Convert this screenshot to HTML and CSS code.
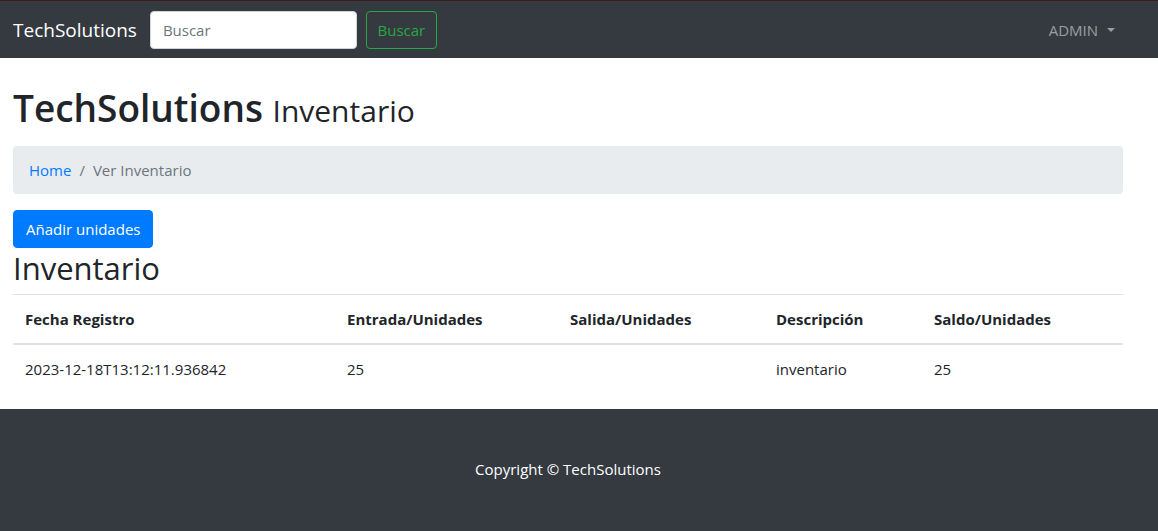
FILE: index.html
```html
<!DOCTYPE html>
<html lang="es">
<head>
<meta charset="utf-8">
<title>TechSolutions Inventario</title>
<link rel="stylesheet" href="styles.css">
</head>
<body>
<nav class="navbar">
  <a class="brand" href="#">TechSolutions</a>
  <form class="search">
    <input class="search-input" type="text" placeholder="Buscar">
    <button class="btn-outline-success" type="button">Buscar</button>
  </form>
  <div class="nav-right">
    <a class="nav-link" href="#">ADMIN<span class="caret"></span></a>
  </div>
</nav>
<main class="content">
  <h1 class="title">TechSolutions <small>Inventario</small></h1>
  <ol class="breadcrumb">
    <li><a href="#">Home</a></li>
    <li class="active">Ver Inventario</li>
  </ol>
  <button class="btn-primary" type="button">Añadir unidades</button>
  <h2 class="subtitle">Inventario</h2>
  <table class="table">
    <colgroup>
      <col class="c1"><col class="c2"><col class="c3"><col class="c4"><col class="c5">
    </colgroup>
    <thead>
      <tr>
        <th>Fecha Registro</th>
        <th>Entrada/Unidades</th>
        <th>Salida/Unidades</th>
        <th>Descripción</th>
        <th>Saldo/Unidades</th>
      </tr>
    </thead>
    <tbody>
      <tr>
        <td>2023-12-18T13:12:11.936842</td>
        <td>25</td>
        <td></td>
        <td>inventario</td>
        <td>25</td>
      </tr>
    </tbody>
  </table>
</main>
<footer class="footer">
  <div class="footer-inner">Copyright © TechSolutions</div>
</footer>
</body>
</html>
```

FILE: styles.css
```css
* { box-sizing: border-box; }
html, body { margin: 0; padding: 0; }
body {
  font-family: "Open Sans", "Noto Sans", sans-serif;
  font-size: 15px;
  line-height: 1.5;
  color: #212529;
  background: #fff;
}
a { text-decoration: none; }

.navbar {
  display: flex;
  align-items: center;
  height: 58px;
  background: #343a40;
  border-top: 1px solid #3b1c1f;
  padding: 1px 35px 0 13px;
}
.brand {
  color: #fff;
  font-size: 19px;
  line-height: 30px;
  margin-right: 13px;
}
.search { display: flex; align-items: center; }
.search-input {
  width: 207px;
  height: 38px;
  border: 1px solid #ced4da;
  border-radius: 4px;
  padding: 6px 12px;
  font: inherit;
  color: #495057;
  background: #fff;
}
.search-input::placeholder { color: #6c757d; opacity: 1; }
.btn-outline-success {
  margin-left: 9px;
  height: 38px;
  width: 71px;
  padding: 0;
  border: 1px solid #28a745;
  border-radius: 4px;
  background: transparent;
  color: #28a745;
  font: inherit;
}
.nav-right { margin-left: auto; }
.nav-link {
  color: rgba(255,255,255,.5);
  display: inline-flex;
  align-items: center;
  padding: 8px;
}
.caret {
  display: inline-block;
  margin-left: 9px;
  border-top: 4.5px solid rgba(255,255,255,.5);
  border-left: 4.5px solid transparent;
  border-right: 4.5px solid transparent;
}

.content {
  padding: 0 35px 0 13px;
}
.title {
  margin: 26px 0 11px;
  font-size: 37px;
  font-weight: 600;
  line-height: 48px;
}
.title small {
  font-size: 30px;
  font-weight: 400;
}
.breadcrumb {
  display: flex;
  list-style: none;
  margin: 0 0 16px;
  padding: 0 16px;
  height: 48px;
  align-items: center;
  background: #e9ecef;
  border-radius: 4px;
}
.breadcrumb a { color: #007bff; }
.breadcrumb li + li::before {
  content: "/";
  color: #6c757d;
  padding: 0 8px;
}
.breadcrumb .active { color: #6c757d; }
.btn-primary {
  display: block;
  height: 38px;
  padding: 0 12px;
  border: 1px solid #007bff;
  border-radius: 4px;
  background: #007bff;
  color: #fff;
  font: inherit;
}
.subtitle {
  margin: 1px 0 7px;
  font-size: 31px;
  font-weight: 500;
  line-height: 38px;
}
.table {
  width: 1110px;
  border-collapse: collapse;
  margin-bottom: 16px;
}
.c1 { width: 322px; }
.c2 { width: 223px; }
.c3 { width: 206px; }
.c4 { width: 158px; }
.c5 { width: 201px; }
.table th, .table td {
  padding: 12px;
  text-align: left;
  border-top: 1px solid #dee2e6;
  line-height: 24px;
}
.table th { font-weight: 700; }
.table thead th { border-bottom: 2px solid #dee2e6; }

.footer {
  background: #343a40;
  color: #fff;
  padding: 48px 35px 52px 13px;
}
.footer-inner { text-align: center; line-height: 24px; }
```
